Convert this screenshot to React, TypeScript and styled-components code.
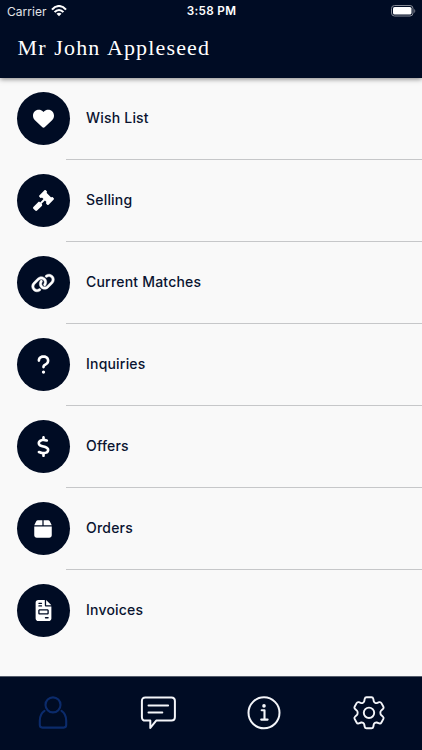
import React from "react";
import styled, { createGlobalStyle } from "styled-components";
import { FaHeart, FaLink, FaQuestion, FaDollarSign, FaBox, FaFileInvoice } from "react-icons/fa6";
import { FaGavel } from "react-icons/fa";

const NAVY = "#000c24";

const GlobalStyle = createGlobalStyle`
  * { box-sizing: border-box; }
  body { margin: 0; background: #f9f9f9; font-family: Inter, sans-serif; }
`;

const Screen = styled.div`
  display: flex;
  flex-direction: column;
  width: 100%;
  height: 750px;
  overflow: hidden;
  background: #f9f9f9;
`;

const Header = styled.header`
  flex: none;
  height: 78px;
  background: ${NAVY};
  color: #fff;
  box-shadow: 0 1px 5px rgba(0, 0, 0, 0.5);
  z-index: 1;
`;

const StatusBar = styled.div`
  display: grid;
  grid-template-columns: 1fr auto 1fr;
  align-items: center;
  height: 22px;
  padding: 0 6px 0 7px;
`;

const Carrier = styled.div`
  display: flex;
  align-items: center;
  gap: 4px;
  color: #e2e4e8;
  font-size: 12px;
  letter-spacing: 0.05px;
`;

const Clock = styled.div`
  font-size: 11.7px;
  font-weight: 600;
  letter-spacing: 0.35px;
`;

const BatterySlot = styled.div`
  display: flex;
  justify-content: flex-end;
`;

const Title = styled.h1`
  margin: 0;
  padding: 12px 0 0 17.5px;
  font: 400 22px/27px "Liberation Serif", serif;
  letter-spacing: 1.15px;
  word-spacing: 1px;
  white-space: nowrap;
`;

const Menu = styled.main`
  flex: 1;
`;

const Row = styled.div`
  display: flex;
  height: 82px;
  padding-left: 16.5px;
`;

const Badge = styled.div`
  display: flex;
  align-items: center;
  justify-content: center;
  flex: none;
  width: 53px;
  height: 53px;
  margin: 14px -4px 0 0;
  border-radius: 50%;
  background: ${NAVY};
  color: #fff;
`;

const Label = styled.div<{ $divided: boolean }>`
  display: flex;
  align-items: center;
  flex: 1;
  padding: 0 0 2px 20.5px;
  border-bottom: 1px solid ${(p) => (p.$divided ? "#c6c7c9" : "transparent")};
  color: #0a1430;
  font-size: 14px;
  font-weight: 500;
  letter-spacing: 0.2px;
`;

const LinkIcon = styled(FaLink)`
  stroke: currentColor;
  stroke-width: 12px;
`;

const TabBar = styled.nav`
  display: grid;
  grid-template-columns: repeat(4, 1fr);
  flex: none;
  height: 74px;
  border-top: 1px solid #555d6c;
  background: ${NAVY};
`;

const Tab = styled.div<{ $active?: boolean }>`
  display: flex;
  justify-content: center;
  padding-top: 18px;
  color: ${(p) => (p.$active ? "#0b2b6b" : "#f4f6fa")};

  svg { fill: none; stroke: currentColor; stroke-linecap: round; stroke-linejoin: round; }
`;

const items = [
  { label: "Wish List", icon: <FaHeart size={21} /> },
  { label: "Selling", icon: <FaGavel size={21} /> },
  { label: "Current Matches", icon: <LinkIcon size={24} /> },
  { label: "Inquiries", icon: <FaQuestion size={21} /> },
  { label: "Offers", icon: <FaDollarSign size={21} /> },
  { label: "Orders", icon: <FaBox size={20} /> },
  { label: "Invoices", icon: <FaFileInvoice size={21} /> },
];

const Wifi = () => (
  <svg width="16" height="12" viewBox="0 0 16 12" fill="none" stroke="#fff" strokeWidth="2.1">
    <path d="M1 4.6C5-.2 11-.2 15 4.6M3.6 7.1c2.5-2.9 6.3-2.9 8.8 0" />
    <path d="M8 11.3 5.5 8.8c1.4-1.4 3.6-1.4 5 0Z" fill="#fff" stroke="none" />
  </svg>
);

const Battery = () => (
  <svg width="25" height="12" viewBox="0 0 25 12">
    <rect x=".5" y=".5" width="21.5" height="10.5" rx="3" fill="none" stroke="#848995" />
    <rect x="2" y="2" width="18.5" height="7.5" rx="1.6" fill="#fff" />
    <path d="M23.3 4v4c1.3-.6 1.3-3.4 0-4Z" fill="#848995" />
  </svg>
);

export default function App() {
  return (
    <Screen>
      <GlobalStyle />
      <Header>
        <StatusBar>
          <Carrier>Carrier<Wifi /></Carrier>
          <Clock>3:58 PM</Clock>
          <BatterySlot><Battery /></BatterySlot>
        </StatusBar>
        <Title>Mr John Appleseed</Title>
      </Header>
      <Menu>
        {items.map((item, i) => (
          <Row key={item.label}>
            <Badge>{item.icon}</Badge>
            <Label $divided={i < items.length - 1}>{item.label}</Label>
          </Row>
        ))}
      </Menu>
      <TabBar>
        <Tab $active>
          <svg width="36" height="36" viewBox="0 -.5 36 36" strokeWidth="2.1">
            <circle cx="18" cy="9.4" r="7.5" />
            <path d="M9.5 15.4C6.2 17.6 4.8 20.7 4.8 25.2v4.4c0 1.6.9 2.5 2.5 2.5h21.4c1.6 0 2.5-.9 2.5-2.5v-4.4c0-4.5-1.4-7.6-4.7-9.8" />
          </svg>
        </Tab>
        <Tab>
          <svg width="38" height="36" viewBox="-1.4 -.5 38 36" strokeWidth="2">
            <path d="M5 1.9h26c2.3 0 3.5 1.3 3.5 3.5v16.2c0 2.3-1.2 3.5-3.5 3.5H15.8L9.9 32.4v-7.3H5c-2.3 0-3.5-1.2-3.5-3.5V5.4C1.5 3.2 2.7 1.9 5 1.9Z" />
            <path d="M8.1 10.1h19.6M8.1 17.1h13.8" />
          </svg>
        </Tab>
        <Tab>
          <svg width="36" height="36" viewBox="0 -.3 36 36" strokeWidth="2">
            <circle cx="18" cy="17.5" r="15.5" />
            <path d="M15.7 15h2.8v9.3m-3.3 0h6.4" strokeWidth="2.1" />
            <circle cx="18" cy="10.6" r="1.8" fill="currentColor" stroke="none" />
          </svg>
        </Tab>
        <Tab>
          <svg width="36" height="36" viewBox="0 -.5 36 36" strokeWidth="1.9">
            <path d="M15.5 1.8h5c1.1 0 1.6.6 1.8 1.6l.5 2.5c.2 1 1.9 2 2.9 1.7l2.5-.9c1-.3 1.7 0 2.2.9l2 3.6c.5.9.3 1.6-.5 2.3l-1.8 1.6c-1 .9-1 3.5 0 4.4l1.8 1.6c.8.7 1 1.4.5 2.3l-2 3.6c-.5.9-1.2 1.2-2.2.9l-2.5-.9c-1-.3-2.7.7-2.9 1.7l-.5 2.5c-.2 1-.7 1.6-1.8 1.6h-5c-1.1 0-1.6-.6-1.8-1.6l-.5-2.5c-.2-1-1.9-2-2.9-1.7l-2.5.9c-1 .3-1.7 0-2.2-.9l-2-3.6c-.5-.9-.3-1.6.5-2.3l1.8-1.6c1-.9 1-3.5 0-4.4l-1.8-1.6c-.8-.7-1-1.4-.5-2.3l2-3.6c.5-.9 1.2-1.2 2.2-.9l2.5.9c1 .3 2.7-.7 2.9-1.7l.5-2.5c.2-1 .7-1.6 1.8-1.6Z" />
            <circle cx="18" cy="17.3" r="5.2" />
          </svg>
        </Tab>
      </TabBar>
    </Screen>
  );
}
